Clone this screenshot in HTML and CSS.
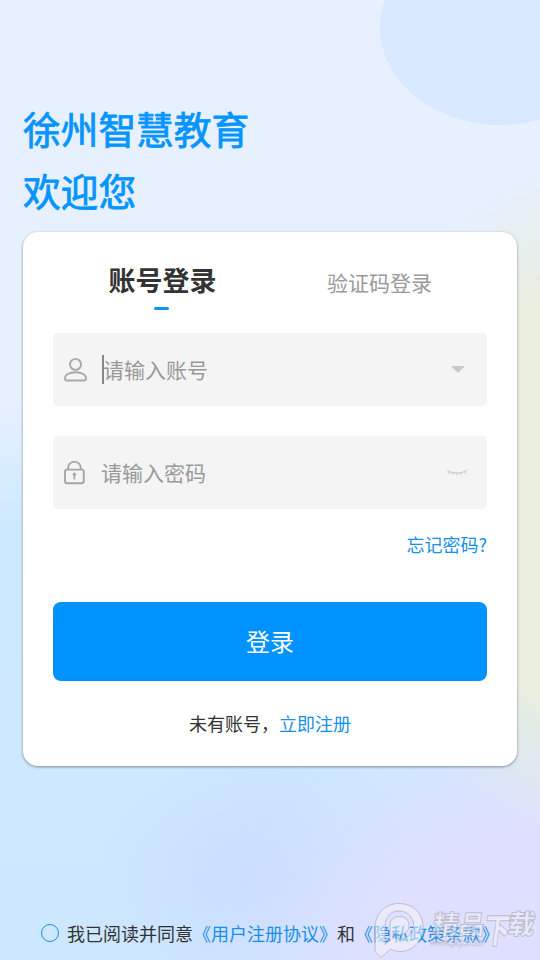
FILE: index.html
```html
<!DOCTYPE html>
<html lang="zh-CN">
<head>
<meta charset="utf-8">
<title>徐州智慧教育</title>
<link rel="stylesheet" href="styles.css">
</head>
<body>
<main class="page">
  <div class="orb"></div>
  <header class="welcome">
    <div>徐州智慧教育</div>
    <div>欢迎您</div>
  </header>
  <section class="card">
    <nav class="tabs">
      <div class="tab active">账号登录</div>
      <div class="tab">验证码登录</div>
    </nav>
    <div class="field">
      <svg class="icon" width="26" height="28" viewBox="0 0 26 28" fill="none" stroke="#aaa" stroke-width="1.9">
        <circle cx="12.5" cy="8.4" r="5.5"/>
        <path d="M12.500 16.200C6 16.200 2 18.800 2 22.400c0 1.600.7 2.100 2 2.100h17c1.300 0 2-.5 2-2.100 0-3.600-4-6.200-10.500-6.200z"/>
      </svg>
      <span class="caret"></span>
      <span class="placeholder account">请输入账号</span>
      <svg class="arrow" width="14" height="7" viewBox="0 0 14 7"><path d="M0 0h14L7 7z" fill="#c9c9c9"/></svg>
    </div>
    <div class="field">
      <svg class="icon" width="26" height="28" viewBox="0 0 26 28" fill="none" stroke="#a5a5a5" stroke-width="1.9">
        <rect x="2" y="10.600" width="18.800" height="13.600" rx="2"/>
        <path d="M5 10.500V9.500C5 5.500 7.500 2.900 11.400 2.900s6.400 2.600 6.400 6.600v1"/>
        <circle cx="11.400" cy="15.400" r="1.300" fill="#a5a5a5" stroke-width="1"/>
        <path d="M11.400 15v5.500" stroke-width="1.600"/>
      </svg>
      <span class="placeholder secret">请输入密码</span>
      <svg class="lash" width="22" height="8" viewBox="0 0 22 8" fill="none" stroke="#c4c4c4" stroke-width="1">
        <path d="M1 1c5 4 15 4 20 0M4 2.500L2.500 5M7.700 3.500L6.700 5.800M11 3.800v2.400M14.300 3.500l1 2.300M18 2.500l2 2.300"/>
      </svg>
    </div>
    <div class="forgot">忘记密码?</div>
    <div class="submit">登录</div>
    <div class="register">未有账号，<span class="link">立即注册</span></div>
  </section>
  <footer class="agreement">
    <span class="radio"></span>
    <span>我已阅读并同意<span class="link">《用户注册协议》</span>和<span class="link">《隐私政策条款》</span></span>
  </footer>
  <svg class="watermark" width="170" height="60" viewBox="370 900 170 60">
    <path class="mark" fill-rule="evenodd" d="M399 903.500c14 0 24 9.500 24 23.500 0 14-10 24.500-23 24.500-4 0-7-.8-9-2.500l-10.500 8.500-5.500-6V928c0-14.500 10-24.500 24-24.500zm0 7.500c8 0 14.500 5.500 14.500 14.500 0 8-6 13.500-13.500 13.500-3 0-5-.8-7-2v-5c2 1.800 4 2.500 6.500 2.500 5.500 0 9.500-3.500 9.500-9s-4-9-9.500-9-9.500 3.500-9.500 9v15l-5 4v-18.500c0-9 6-15 14-15z"/>
    <g transform="skewX(-8)">
      <text class="mark name" x="563" y="934.500" font-size="26">精品</text>
      <text class="mark name" x="615" y="943" font-size="35" textLength="26" lengthAdjust="spacingAndGlyphs">下</text>
      <text class="mark name" x="638" y="934.500" font-size="27">载</text>
    </g>
    <text class="mark site" x="430" y="946" textLength="53" lengthAdjust="spacingAndGlyphs">www.j9p.com</text>
  </svg>
</main>
</body>
</html>
```
FILE: styles.css
```css
* { box-sizing: border-box; }
body {
  margin: 0;
  font-family: "Noto Sans CJK SC", sans-serif;
  color: #333;
}
.page {
  position: relative;
  display: flex;
  flex-direction: column;
  width: 540px;
  height: 960px;
  padding: 97px 23px 0;
  overflow: hidden;
  background:
    radial-gradient(ellipse 240px 340px at 590px 500px, #e9eddd 0%, #e9eddd 60%, #e9eddd00 100%),
    radial-gradient(ellipse 380px 290px at 590px 980px, #dfe0ff 0%, #dfe0ff 55%, #dfe0ff00 100%),
    radial-gradient(ellipse 170px 130px at 270px 880px, #cadcff 0%, #cadcff00 100%),
    linear-gradient(#e6f0ff 0 400px, #cde9ff 530px, #cde7ff 100%);
}
.orb {
  position: absolute;
  left: 380px;
  top: -70px;
  width: 240px;
  height: 195px;
  border-radius: 50%;
  background: #d8e8ff;
}
.welcome {
  position: relative;
  height: 135px;
  color: #0694ff;
  font-size: 37.700px;
  line-height: 62px;
  -webkit-text-stroke: .8px #0694ff;
}
.card {
  flex: none;
  height: 534px;
  padding: 26px 30px 0;
  border-radius: 15px;
  background: #fff;
  box-shadow: 0 1px 3px rgba(0, 0, 0, .4);
}
.tabs { display: flex; height: 75px; }
.tab {
  position: relative;
  flex: 1;
  padding: 3px 0 0 2px;
  text-align: center;
  font-size: 21px;
  line-height: 42px;
  color: #999;
}
.tab.active {
  padding-top: 1px;
  font-size: 27px;
  font-weight: 700;
  color: #333;
}
.tab.active::after {
  content: "";
  position: absolute;
  left: 101px;
  top: 49px;
  width: 15px;
  height: 3px;
  border-radius: 2px;
  background: #1592ee;
}
.field {
  display: flex;
  align-items: center;
  height: 73px;
  margin-bottom: 30px;
  padding: 0 22px 0 10px;
  border-radius: 5px;
  background: #f4f4f4;
}
.icon { margin-right: 13px; }
.caret { width: 2px; height: 29px; background: #888; }
.placeholder {
  padding-bottom: 1px;
  font-size: 21px;
  line-height: 32px;
  color: #999;
}
.account { margin-left: -1px; }
.secret { margin-left: -1px; }
.arrow, .lash { margin-left: auto; }
.lash { margin-right: -3px; }
.forgot {
  margin-top: -9px;
  text-align: right;
  font-size: 18px;
  line-height: 28px;
  color: #1690e8;
}
.submit {
  height: 79px;
  margin-top: 44px;
  border-radius: 8px;
  background: #0092ff;
  color: #fff;
  text-align: center;
  font-size: 24px;
  line-height: 78px;
}
.register {
  margin-top: 28px;
  text-align: center;
  font-size: 18px;
  line-height: 28px;
}
.link { color: #1690e8; }
.agreement {
  display: flex;
  align-items: center;
  gap: 8px;
  margin-top: 153px;
  padding-left: 18px;
  font-size: 18px;
  line-height: 28px;
  white-space: nowrap;
}
.radio {
  width: 18px;
  height: 18px;
  border: 1px solid #1690e8;
  border-radius: 50%;
}
.watermark { position: absolute; left: 370px; top: 900px; }
.mark {
  fill: #f2f2f4;
  fill-opacity: .55;
  stroke: #a0a1b4;
  stroke-opacity: .6;
  stroke-width: 1;
}
.name { font-weight: 900; }
.site { font: bold 11px "Liberation Sans", sans-serif; stroke-width: .6; }
```
